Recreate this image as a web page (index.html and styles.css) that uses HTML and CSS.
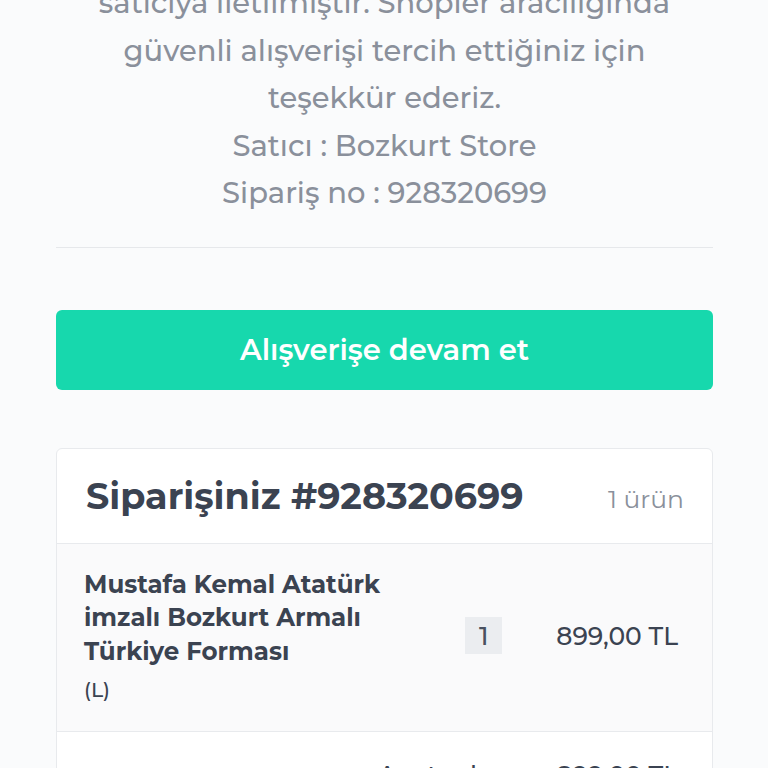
FILE: index.html
```html
<!DOCTYPE html>
<html lang="tr">
<head>
    <meta charset="UTF-8">
    <meta name="viewport" content="width=device-width, initial-scale=1.0">
    <title>Siparişiniz alındı</title>
    <link rel="stylesheet" href="styles.css">
</head>
<body>

    <div class="page">
        <div class="message">
            <p>satıcıya iletilmiştir. Shopier aracılığında güvenli alışverişi tercih ettiğiniz için teşekkür ederiz.</p>
            <p>Satıcı : Bozkurt Store</p>
            <p>Sipariş no : 928320699</p>
        </div>

        <a class="continue-btn" href="#">Alışverişe devam et</a>

        <div class="order-card">
            <div class="order-header">
                <h2>Siparişiniz #928320699</h2>
                <span class="item-count">1 ürün</span>
            </div>
            <div class="order-item">
                <div class="item-info">
                    <div class="item-name">Mustafa Kemal Atatürk imzalı Bozkurt Armalı Türkiye Forması</div>
                    <div class="item-variant">(L)</div>
                </div>
                <div class="item-qty">1</div>
                <div class="item-price">899,00 TL</div>
            </div>
            <div class="order-total">
                <span class="total-label">Ara toplam</span>
                <span class="item-price">899,00 TL</span>
            </div>
        </div>
    </div>

</body>
</html>
```

FILE: styles.css
```css
* {
    margin: 0;
    padding: 0;
    box-sizing: border-box;
}

body {
    font-family: "Montserrat", "Open Sans", sans-serif;
    background: #fafbfc;
    color: #3b4351;
    height: 768px;
    overflow: hidden;
}

.page {
    padding: 0 55px 0 56px;
}

.message {
    margin-top: -21px;
    padding-bottom: 30px;
    border-bottom: 1px solid #e6e8eb;
    text-align: center;
    color: #8a909b;
    font-size: 29px;
    font-weight: 500;
    line-height: 47.5px;
}

.message p:first-child {
    padding: 0 30px;
}

.continue-btn {
    display: flex;
    justify-content: center;
    align-items: center;
    margin-top: 62px;
    height: 80px;
    background: #17d8ad;
    border-radius: 6px;
    color: #fff;
    font-size: 29px;
    font-weight: 600;
    text-decoration: none;
}

.order-card {
    margin-top: 58px;
    background: #fff;
    border: 1px solid #e8eaed;
    border-radius: 6px;
}

.order-header {
    display: flex;
    justify-content: space-between;
    align-items: center;
    height: 95px;
    padding: 0 28px 0 29px;
    border-bottom: 1px solid #e8eaed;
}

.order-header h2 {
    font-size: 36.5px;
    font-weight: 700;
    color: #3b4351;
}

.item-count {
    font-size: 25px;
    color: #8a909b;
    margin-top: 6px;
}

.order-item {
    display: flex;
    align-items: center;
    padding: 24px 34px 27px 27px;
    background: #fafafb;
    border-bottom: 1px solid #e8eaed;
}

.item-info {
    flex: 1;
}

.item-name {
    width: 330px;
    font-size: 24.5px;
    font-weight: 700;
    line-height: 33.5px;
    color: #3b4351;
}

.item-variant {
    margin-top: 8px;
    font-size: 20.5px;
    font-weight: 500;
    line-height: 28px;
    color: #3b4351;
}

.item-qty {
    width: 37px;
    height: 37px;
    display: flex;
    justify-content: center;
    align-items: center;
    background: #ebedf0;
    font-size: 26px;
    font-weight: 500;
    color: #4a5160;
}

.item-price {
    margin-left: 54px;
    font-size: 25px;
    font-weight: 500;
    color: #3b4351;
}

.order-total {
    display: flex;
    justify-content: flex-end;
    align-items: center;
    padding: 28px 34px 20px 27px;
}

.order-total .item-price {
    margin-left: 38px;
}

.total-label {
    font-size: 25px;
    font-weight: 500;
    color: #3b4351;
}
```
